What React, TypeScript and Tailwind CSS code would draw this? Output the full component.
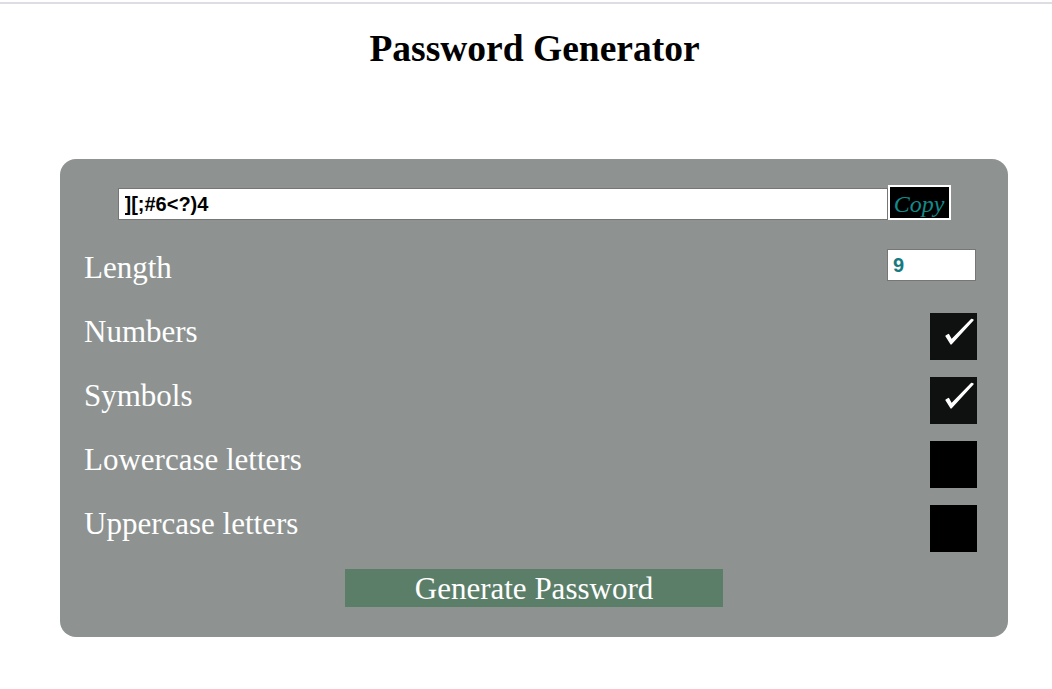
import { useState } from "react";

const options = [
  { label: "Numbers", checked: true },
  { label: "Symbols", checked: true },
  { label: "Lowercase letters", checked: false },
  { label: "Uppercase letters", checked: false },
];

function CheckBox({ checked }: { checked: boolean }) {
  return (
    <div
      className={`mt-[8px] w-[47px] h-[47px] relative ${checked ? "bg-[#0f1010]" : "bg-black"}`}
    >
      {checked && (
        <svg viewBox="0 0 47 47" className="absolute inset-0 w-full h-full">
          <path
            d="M16 23 L21 31 L43 7 L41.5 6.5 L21.5 27 L18.5 21.5 Z"
            fill="white"
            stroke="white"
            strokeWidth="1.4"
            strokeLinejoin="round"
          />
        </svg>
      )}
    </div>
  );
}

export default function App() {
  const [length, setLength] = useState("9");

  return (
    <div className="min-h-screen bg-white font-['Liberation_Serif',serif]">
      <div className="h-[2px] mt-[2px] bg-[#dddde3]" />

      <h1 className="mt-[24px] pl-[17px] text-center text-[37.5px] leading-[42px] font-bold text-black">
        Password Generator
      </h1>

      {/* Generator panel */}
      <div className="mt-[89px] ml-[60px] w-[948px] rounded-[16px] bg-[#8e9392] pt-[26px] pb-[30px]">
        <div className="flex justify-center items-end h-[35px]">
          <input
            readOnly
            value="][;#6<?)4"
            className="w-[770px] h-[32px] bg-white border border-[#767676] px-[6px] text-[20px] font-bold text-black font-['Liberation_Sans',sans-serif] outline-none"
          />
          <button className="w-[63px] h-[35px] pt-[2px] border-2 border-white bg-black text-[24px] leading-none italic text-[#128a8a]">
            Copy
          </button>
        </div>

        <div className="mt-[16px] pl-[24px] pr-[31px]">
          <div className="flex items-center justify-between h-[64px]">
            <span className="text-[31px] leading-[36px] text-white">Length</span>
            <input
              value={length}
              onChange={(e) => setLength(e.target.value)}
              className="mr-[1px] mb-[6px] w-[89px] h-[32px] bg-white border border-[#767676] px-[5px] text-[20px] font-bold text-[#167b80] font-['Liberation_Sans',sans-serif] outline-none"
            />
          </div>

          {options.map((opt) => (
            <div key={opt.label} className="flex items-center justify-between h-[64px]">
              <span className="text-[31px] leading-[36px] text-white">{opt.label}</span>
              <CheckBox checked={opt.checked} />
            </div>
          ))}
        </div>

        <div className="mt-[13px] flex justify-center">
          <button className="w-[378px] h-[38px] bg-[#5b7e69] text-[31px] leading-[40px] text-white">
            Generate Password
          </button>
        </div>
      </div>
    </div>
  );
}
